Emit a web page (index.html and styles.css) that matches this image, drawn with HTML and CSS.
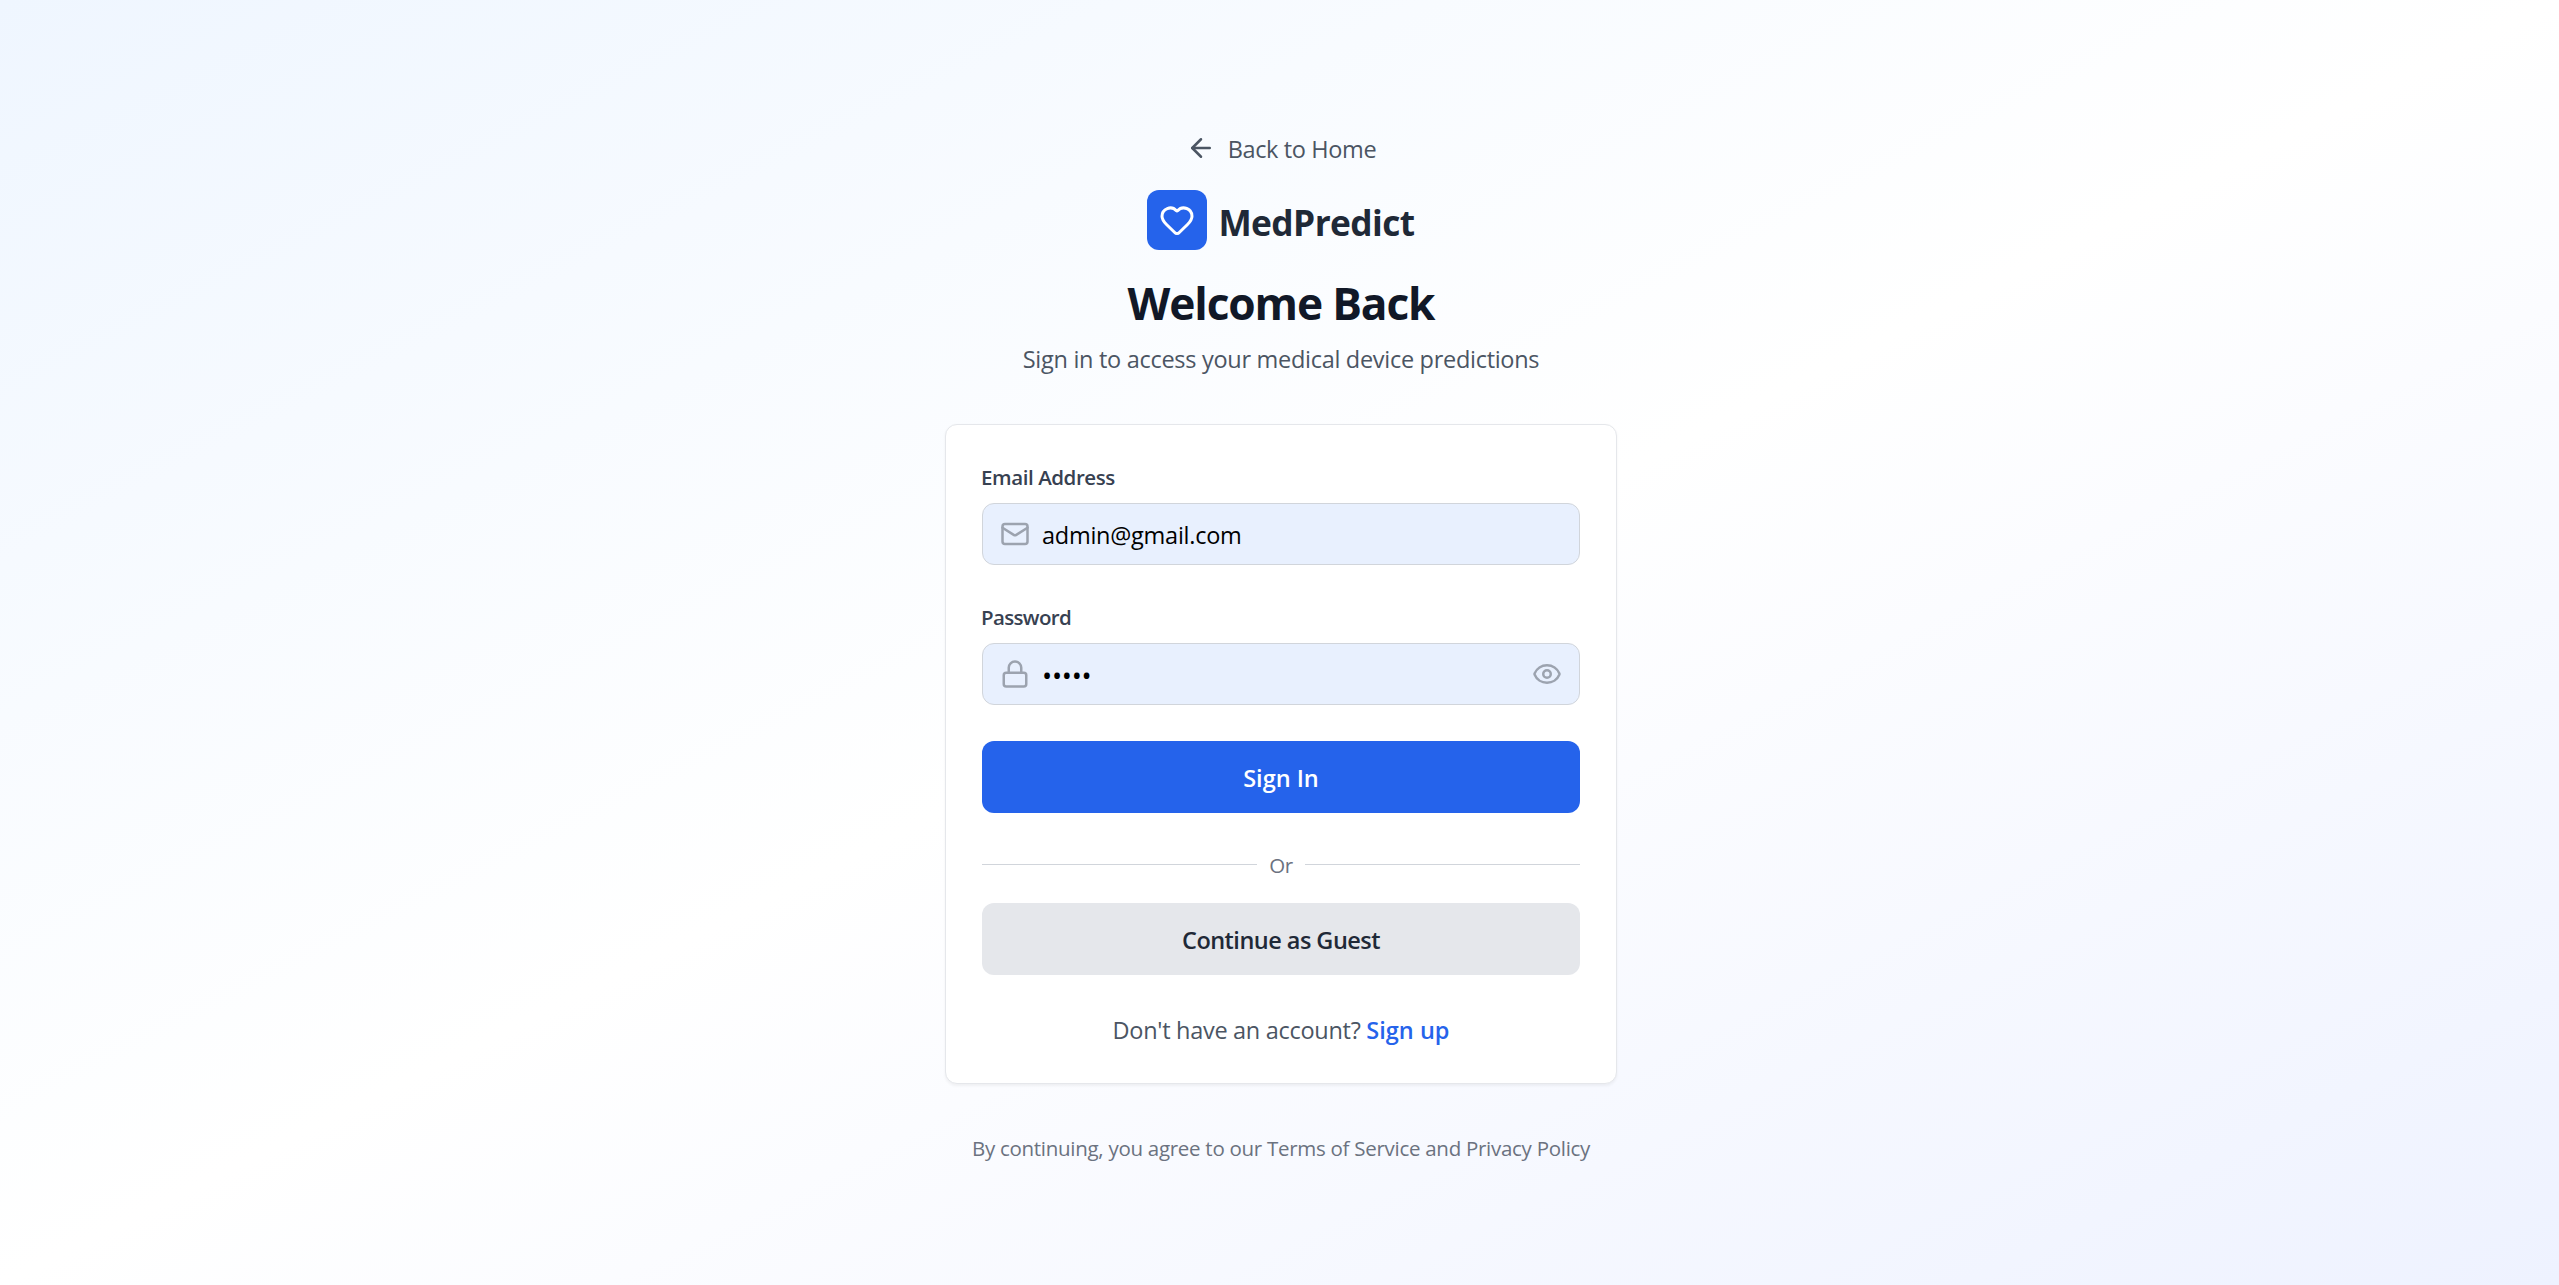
FILE: index.html
```html
<!DOCTYPE html>
<html lang="en">
<head>
<meta charset="utf-8">
<title>MedPredict - Sign In</title>
<link rel="stylesheet" href="styles.css">
</head>
<body>
<main class="page">
  <a class="back" href="#">
    <svg class="icon" viewBox="0 0 24 24"><path d="m12 19-7-7 7-7"/><path d="M19 12H5"/></svg>
    <span>Back to Home</span>
  </a>
  <div class="brand">
    <div class="brand-mark">
      <svg class="icon" viewBox="0 0 24 24"><path d="M2 9.5a5.5 5.5 0 0 1 9.591-3.676.56.56 0 0 0 .818 0A5.49 5.49 0 0 1 22 9.5c0 2.29-1.5 4-3 5.5l-5.492 5.313a2 2 0 0 1-3 .019L5 15c-1.5-1.5-3-3.2-3-5.5"/></svg>
    </div>
    <span class="brand-name">MedPredict</span>
  </div>
  <h1 class="title">Welcome Back</h1>
  <p class="subtitle">Sign in to access your medical device predictions</p>

  <form class="card">
    <label class="label" for="email">Email Address</label>
    <div class="field">
      <svg class="icon" viewBox="0 0 24 24"><rect x="2" y="4" width="20" height="16" rx="2"/><path d="m22 7-8.97 5.7a1.94 1.94 0 0 1-2.06 0L2 7"/></svg>
      <input class="input" id="email" type="text" value="admin@gmail.com">
    </div>
    <label class="label label-password" for="password">Password</label>
    <div class="field">
      <svg class="icon" viewBox="0 0 24 24"><rect x="3" y="11" width="18" height="11" rx="2"/><path d="M7 11V7a5 5 0 0 1 10 0v4"/></svg>
      <input class="input input-password" id="password" type="password" value="admin">
      <svg class="icon" viewBox="0 0 24 24"><path d="M2.062 12.348a1 1 0 0 1 0-.696 10.75 10.75 0 0 1 19.876 0 1 1 0 0 1 0 .696 10.75 10.75 0 0 1-19.876 0"/><circle cx="12" cy="12" r="3"/></svg>
    </div>
    <button class="button button-primary" type="button">Sign In</button>
    <div class="divider"><span>Or</span></div>
    <button class="button button-guest" type="button">Continue as Guest</button>
    <p class="signup">Don't have an account? <a href="#">Sign up</a></p>
  </form>

  <p class="terms">By continuing, you agree to our Terms of Service and Privacy Policy</p>
</main>
</body>
</html>
```
FILE: styles.css
```css
* {
  box-sizing: border-box;
  margin: 0;
}

body {
  font-family: "Open Sans", "Noto Sans", sans-serif;
  font-size: 23.5px;
  line-height: 36px;
  color: #4b5563;
}

.page {
  display: flex;
  flex-direction: column;
  align-items: center;
  height: 1285px;
  padding: 131px 0 0 3px;
  background: linear-gradient(to bottom right, #eff6ff, #ffffff, #eef2ff);
}

.icon {
  flex: none;
  width: 30px;
  height: 30px;
  fill: none;
  stroke: currentColor;
  stroke-width: 2;
  stroke-linecap: round;
  stroke-linejoin: round;
}

.back {
  display: flex;
  gap: 12px;
  color: #4b5563;
  letter-spacing: -0.36px;
  text-decoration: none;
}

.back .icon {
  margin-top: 2px;
}

.brand {
  display: flex;
  align-items: center;
  gap: 11px;
  margin-top: 23px;
}

.brand-mark {
  display: grid;
  place-items: center;
  width: 60px;
  height: 60px;
  border-radius: 12px;
  background: #2563eb;
  color: #ffffff;
}

.brand-mark .icon {
  width: 36px;
  height: 36px;
}

.brand-name {
  padding-top: 3px;
  font-size: 35.3px;
  font-weight: 700;
  letter-spacing: -0.6px;
  color: #1f2937;
}

.title {
  margin-top: 26px;
  font-size: 44.3px;
  line-height: 54px;
  font-weight: 700;
  letter-spacing: -1.15px;
  color: #111827;
}

.subtitle {
  margin-top: 11px;
  letter-spacing: -0.29px;
}

.card {
  display: flex;
  flex-direction: column;
  width: 672px;
  height: 660px;
  margin-top: 47px;
  padding: 37px 36px 0;
  border: 1px solid #e5e7eb;
  border-radius: 12px;
  background: #ffffff;
  box-shadow: 0 1.5px 3px rgba(0, 0, 0, 0.05);
}

.label {
  height: 41px;
  margin-left: -1px;
  font-size: 20.5px;
  line-height: 30px;
  font-weight: 600;
  letter-spacing: -0.42px;
  color: #374151;
}

.label-password {
  margin-top: 37px;
  letter-spacing: -0.65px;
}

.field {
  display: flex;
  align-items: center;
  height: 62px;
  padding: 0 17px;
  border: 1px solid #d1d5db;
  border-radius: 12px;
  background: #e8f0fe;
  color: #9ca3af;
}

.input {
  flex: 1;
  min-width: 0;
  height: 60px;
  padding: 2px 0 0 12px;
  border: 0;
  background: none;
  font: inherit;
  letter-spacing: -0.25px;
  color: #000000;
}

.input-password {
  font-size: 27px;
}

.button {
  height: 72px;
  padding: 2px 0 0;
  border: 0;
  border-radius: 12px;
  font: inherit;
  font-weight: 600;
}

.button-primary {
  margin-top: 36px;
  background: #2563eb;
  color: #ffffff;
}

.button-guest {
  background: #e5e7eb;
  letter-spacing: -0.53px;
  color: #1f2937;
}

.divider {
  display: flex;
  align-items: center;
  gap: 12px;
  height: 30px;
  margin: 36px 0 24px;
  font-size: 20.5px;
  letter-spacing: -0.5px;
  color: #6b7280;
}

.divider span {
  padding-top: 2px;
}

.divider::before,
.divider::after {
  content: "";
  flex: 1;
  height: 1px;
  background: #d1d5db;
}

.signup {
  margin-top: 37px;
  text-align: center;
  letter-spacing: -0.29px;
}

.signup a {
  font-weight: 600;
  letter-spacing: 0;
  color: #2563eb;
  text-decoration: none;
}

.terms {
  margin-top: 49px;
  font-size: 20.5px;
  line-height: 30px;
  letter-spacing: -0.28px;
  color: #6b7280;
}
```
